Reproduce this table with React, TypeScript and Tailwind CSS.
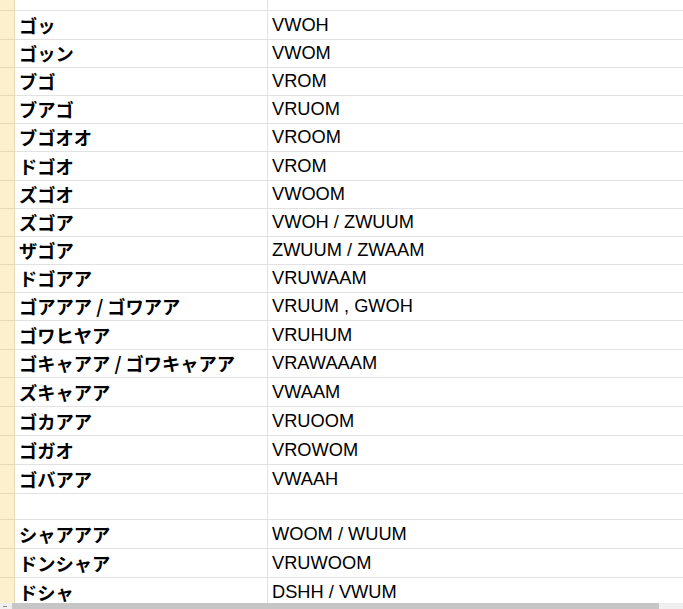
import React from 'react';

type Row = { h: number; jp: string; en: string };

const rows: Row[] = [
  { h: 11, jp: '', en: '' },
  { h: 29, jp: 'ゴッ', en: 'VWOH' },
  { h: 28, jp: 'ゴッン', en: 'VWOM' },
  { h: 28, jp: 'ブゴ', en: 'VROM' },
  { h: 28, jp: 'ブアゴ', en: 'VRUOM' },
  { h: 28, jp: 'ブゴオオ', en: 'VROOM' },
  { h: 29, jp: 'ドゴオ', en: 'VROM' },
  { h: 28, jp: 'ズゴオ', en: 'VWOOM' },
  { h: 28, jp: 'ズゴア', en: 'VWOH / ZWUUM' },
  { h: 28, jp: 'ザゴア', en: 'ZWUUM / ZWAAM' },
  { h: 28, jp: 'ドゴアア', en: 'VRUWAAM' },
  { h: 28, jp: 'ゴアアア / ゴワアア', en: 'VRUUM , GWOH' },
  { h: 29, jp: 'ゴワヒヤア', en: 'VRUHUM' },
  { h: 28, jp: 'ゴキャアア / ゴワキャアア', en: 'VRAWAAAM' },
  { h: 29, jp: 'ズキャアア', en: 'VWAAM' },
  { h: 29, jp: 'ゴカアア', en: 'VRUOOM' },
  { h: 29, jp: 'ゴガオ', en: 'VROWOM' },
  { h: 29, jp: 'ゴバアア', en: 'VWAAH' },
  { h: 26, jp: '', en: '' },
  { h: 29, jp: 'シャアアア', en: 'WOOM / WUUM' },
  { h: 29, jp: 'ドンシャア', en: 'VRUWOOM' },
  { h: 29, jp: 'ドシャ', en: 'DSHH / VWUM' },
];

const App: React.FC = () => {
  return (
    <div className="relative w-[683px] h-[609px] overflow-hidden bg-white text-black">
      {rows.map((r, i) => (
        <div key={i} className="flex" style={{ height: r.h }}>
          <div className="w-[15px] shrink-0 bg-[#fdf0cc] border-r border-b border-[#e6dab3]" />
          <div className="w-[253px] shrink-0 flex items-center pl-1 border-r border-b border-[#e2e2e2] font-['Noto_Sans_CJK_JP',sans-serif] font-bold text-[18.25px] leading-none whitespace-nowrap">
            {r.jp}
          </div>
          <div className="flex-1 flex items-center pl-1 border-b border-[#e2e2e2] font-['Liberation_Sans',Arial,sans-serif] text-[18.25px] leading-none whitespace-nowrap">
            {r.en}
          </div>
        </div>
      ))}

      {/* horizontal scrollbar */}
      <div className="absolute left-0 right-0 bottom-0 h-[6px] flex bg-[#efefef]">
        <div className="w-[12px] flex items-center pl-[3px]">
          <div className="w-[4px] h-[1px] bg-[#888]" />
        </div>
        <div className="w-[647px] bg-[#c6c6c6]" />
      </div>
    </div>
  );
};

export default App;
